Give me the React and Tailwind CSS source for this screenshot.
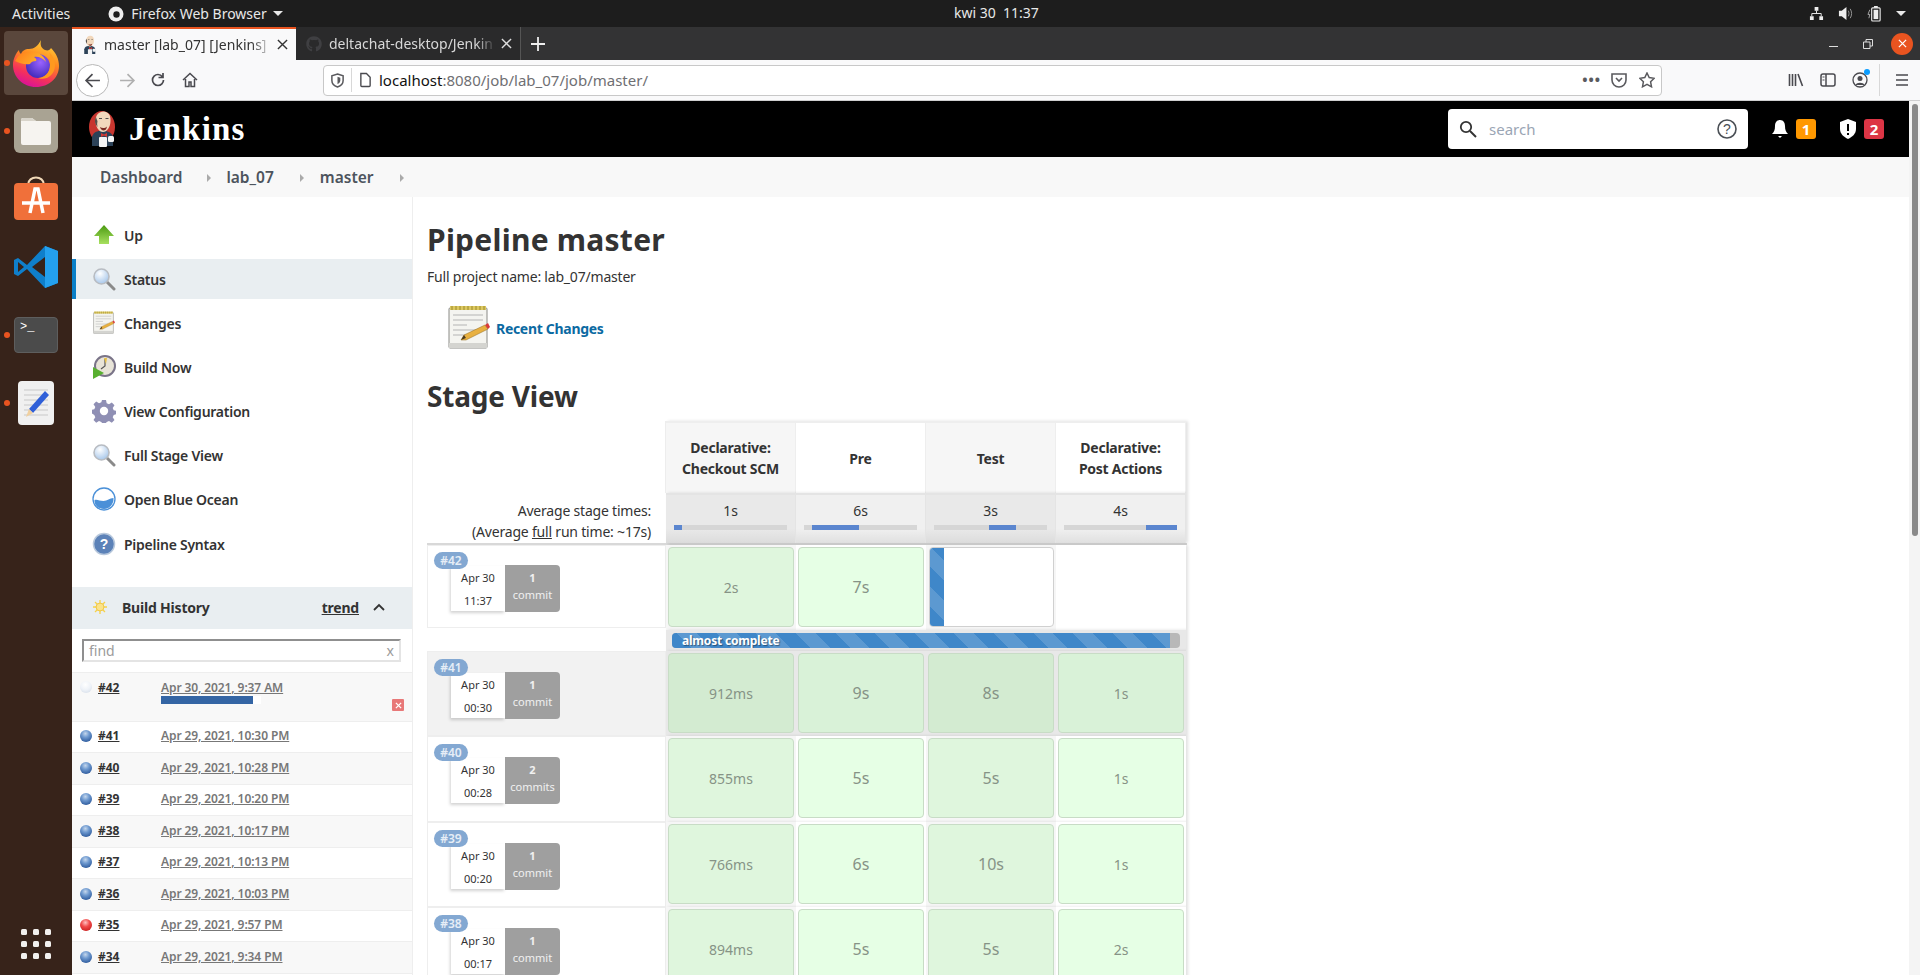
import React from "react";
import { FaGithub } from "react-icons/fa";

const sans = "font-['Noto_Sans',sans-serif]";
const stripes = "bg-[repeating-linear-gradient(45deg,#3f87c9_0,#3f87c9_14px,#5c99d1_14px,#5c99d1_28px)]";

function Jenkins({ className, plain }) {
  return (
    <svg viewBox="0 0 28 38" className={className}>
      {!plain && <ellipse cx="14" cy="17" rx="13" ry="16" fill="#c8362f" />}
      <path d="M4 36V27c1-4 4-6 8-6h6c4 1 7 3 7 7v8z" fill="#2c4258" />
      <path d="M7.500 11c0-6 3.500-9.500 8-9.500s7.500 3.500 7 9.500c0 6-3.500 11-7.500 11s-7.500-5-7.500-11z" fill="#f2d8bc" />
      <path d="M7.500 14c-1-3-.5-5 .5-7 .5 2 1 3 1.500 4-.5 2-.5 4 0 6z" fill="#55504c" />
      <path d="M12 17c2 1.500 5 1.500 7-.5-.5 3-2 4-3.500 4s-3-1.500-3.500-3.500z" fill="#7a2c24" />
      <path d="M11 8.500h3M17.500 8.500h3" stroke="#55504c" strokeWidth="1" />
      <path d="M13 23l3 1.500 3-1.500v4l-3-1.500-3 1.500z" fill="#d33833" />
      <rect x="11" y="27" width="8" height="10" rx="1" fill="#f4f4f4" />
      <rect x="20" y="26" width="6" height="6" rx="1.500" fill="#f4f4f4" />
    </svg>
  );
}

function Firefox() {
  return (
    <svg viewBox="0 0 48 48" className="w-[48px] h-[48px]">
      <defs>
        <linearGradient id="ff" x1="0.75" y1="0" x2="0.35" y2="1">
          <stop offset="0" stopColor="#ffd53a" />
          <stop offset="0.4" stopColor="#ff8a1f" />
          <stop offset="0.75" stopColor="#f5325a" />
          <stop offset="1" stopColor="#d9119a" />
        </linearGradient>
        <radialGradient id="ffp" cx="0.6" cy="0.35" r="0.7">
          <stop offset="0" stopColor="#9a63ff" />
          <stop offset="1" stopColor="#3f2ab8" />
        </radialGradient>
        <linearGradient id="ffh" x1="0" y1="0" x2="1" y2="0.4">
          <stop offset="0" stopColor="#ff7a1a" />
          <stop offset="1" stopColor="#ffb52a" />
        </linearGradient>
      </defs>
      <path d="M29 1c-1 5 0 8 4 10 3 1 5 0 6-2 5 5 8 11 8 18 0 12-10 21-23 21S1 38 1 26c0-6 3-12 6-15 0 2 1 3 2 4 1-3 4-5 8-5 5 0 9-3 12-9z" fill="url(#ff)" />
      <circle cx="26" cy="27" r="12" fill="url(#ffp)" />
      <path d="M3 22c3-6 8-9 14-9 8-1 15 3 17 10-3-4-8-6-12-5 2 1 3 3 2 4-3 0-5 1-6 3-5 1-11-1-15-3z" fill="url(#ffh)" />
      <path d="M38 26c0 8-6 13-12 13 7 3 17-2 17-13 0-6-3-10-6-13 2 4 1 8 1 13z" fill="#ff9a1f" />
    </svg>
  );
}

function Ball({ color = "blue" }) {
  const c = {
    blue: "bg-[radial-gradient(circle_at_45%_30%,#c5d7ec_0%,#6f9ad0_35%,#2f5c9e_80%)]",
    red: "bg-[radial-gradient(circle_at_45%_30%,#ffc0c0_0%,#f04848_40%,#c81e1e_85%)]",
    none: "bg-[radial-gradient(circle_at_45%_30%,#ffffff_0%,#eef2f8_50%,#d5dde8_90%)]",
  }[color];
  return <span className={`block w-[12px] h-[12px] rounded-full shrink-0 ${c}`} />;
}

function Magnifier() {
  return (
    <svg viewBox="0 0 24 24" className="w-[24px] h-[24px]">
      <defs>
        <radialGradient id="lens" cx="0.4" cy="0.3" r="0.8">
          <stop offset="0" stopColor="#ffffff" />
          <stop offset="1" stopColor="#9cc0e8" />
        </radialGradient>
      </defs>
      <line x1="14" y1="14" x2="22" y2="22" stroke="#8a8a8a" strokeWidth="3" strokeLinecap="round" />
      <circle cx="9.5" cy="9.5" r="7.5" fill="url(#lens)" stroke="#b8bcc2" strokeWidth="1.6" />
    </svg>
  );
}

function Notepad({ className }) {
  return (
    <svg viewBox="0 0 44 46" className={className}>
      <rect x="2" y="3" width="38" height="40" rx="1" fill="#f4f4f0" stroke="#8a8a86" />
      <rect x="2" y="38" width="38" height="5" fill="#d4d4d0" />
      <rect x="3" y="1" width="36" height="4" fill="#dcc860" />
      <path d="M5 1v4M9 1v4M13 1v4M17 1v4M21 1v4M25 1v4M29 1v4M33 1v4M37 1v4" stroke="#8a7a20" strokeWidth="0.8" />
      <path d="M6 10h30M6 15h30M6 20h14M6 25h24M6 30h14" stroke="#b4b4b4" strokeWidth="1" />
      <path d="M14 35l3-5 21-10 3 4-22 11z" fill="#e8b040" stroke="#90681c" strokeWidth="0.5" />
      <path d="M38 20l3 4 2-2-2-4z" fill="#d83a3a" />
      <path d="M14 35l3-5 2 3z" fill="#4a3a20" />
    </svg>
  );
}

function BuildNow() {
  return (
    <svg viewBox="0 0 24 24" className="w-[24px] h-[24px]">
      <circle cx="13" cy="11" r="10" fill="#e8e4d8" stroke="#7a7488" strokeWidth="2" />
      <path d="M13 4v7l-4 3" stroke="#555" strokeWidth="1.2" fill="none" />
      <path d="M12 3l3 0-1 6z" fill="#e8c040" />
      <path d="M1 12l11 6-11 6z" fill="#58b030" />
    </svg>
  );
}

function Gear() {
  return (
    <svg viewBox="0 0 24 24" className="w-[24px] h-[24px]">
      <path d="M10 1h4l.7 3.300 2.300 1 2.800-1.800 2.700 2.700-1.800 2.800 1 2.300 3.300.7v3l-3.300.9-1 2.300 1.800 2.800-2.700 2.700-2.800-1.800-2.300 1-.7 1.100h-4l-.7-1.100-2.300-1-2.800 1.800-2.700-2.700 1.800-2.800-1-2.300L-1 14v-3l3.300-.7 1-2.300-1.800-2.800 2.700-2.700L7 4.300l2.300-1z" fill="#8f8fb4" />
      <circle cx="12" cy="12" r="4.2" fill="#fff" />
    </svg>
  );
}

function Ocean() {
  return (
    <svg viewBox="0 0 24 24" className="w-[24px] h-[24px]">
      <circle cx="12" cy="12" r="11" fill="#fff" stroke="#4a90d8" strokeWidth="1.3" />
      <path d="M2.5 13c3-1 5 1 9 1s6-3 10-3c.5 6-4 11-9.500 11S2 18 2.500 13z" fill="#4a90d8" />
    </svg>
  );
}

function Help() {
  return (
    <svg viewBox="0 0 24 24" className="w-[24px] h-[24px]">
      <circle cx="12" cy="12" r="10.500" fill="#5c82b8" stroke="#b8c8dc" strokeWidth="1.500" />
      <text x="12" y="17" textAnchor="middle" fontSize="14" fontWeight="700" fill="#fff" fontFamily="Liberation Sans">?</text>
    </svg>
  );
}

function UpArrow() {
  return (
    <svg viewBox="0 0 24 24" className="w-[24px] h-[24px]">
      <defs>
        <linearGradient id="upg" x1="0" y1="0" x2="0" y2="1">
          <stop offset="0" stopColor="#4a9a10" />
          <stop offset="1" stopColor="#a8e060" />
        </linearGradient>
      </defs>
      <path d="M12 2l10 11h-5v8H7v-8H2z" fill="url(#upg)" />
    </svg>
  );
}

const navItems = [
  ["Up", <UpArrow />],
  ["Status", <Magnifier />],
  ["Changes", <Notepad className="w-[24px] h-[24px]" />],
  ["Build Now", <BuildNow />],
  ["View Configuration", <Gear />],
  ["Full Stage View", <Magnifier />],
  ["Open Blue Ocean", <Ocean />],
  ["Pipeline Syntax", <Help />],
];

const history = [
  ["#41", "Apr 29, 2021, 10:30 PM", "blue", "h-[31px]", "bg-white"],
  ["#40", "Apr 29, 2021, 10:28 PM", "blue", "h-[32px]", "bg-[#f8f8f8]"],
  ["#39", "Apr 29, 2021, 10:20 PM", "blue", "h-[31px]", "bg-white"],
  ["#38", "Apr 29, 2021, 10:17 PM", "blue", "h-[32px]", "bg-[#f8f8f8]"],
  ["#37", "Apr 29, 2021, 10:13 PM", "blue", "h-[31px]", "bg-white"],
  ["#36", "Apr 29, 2021, 10:03 PM", "blue", "h-[32px]", "bg-[#f8f8f8]"],
  ["#35", "Apr 29, 2021, 9:57 PM", "red", "h-[31px]", "bg-white"],
  ["#34", "Apr 29, 2021, 9:34 PM", "blue", "h-[32px]", "bg-[#f8f8f8]"],
];

const stages = [
  { title: ["Declarative:", "Checkout SCM"], avg: "1s", head: "bg-[#f6f6f6]", avgBg: "bg-[linear-gradient(#e9e9e9_70%,#dcdcdc)]", bar: "ml-0 w-[8px]" },
  { title: ["Pre"], avg: "6s", head: "bg-white", avgBg: "bg-[linear-gradient(#f0f0f0_70%,#e0e0e0)]", bar: "ml-[8px] w-[47px]" },
  { title: ["Test"], avg: "3s", head: "bg-[#f6f6f6]", avgBg: "bg-[linear-gradient(#e9e9e9_70%,#dcdcdc)]", bar: "ml-[55px] w-[27px]" },
  { title: ["Declarative:", "Post Actions"], avg: "4s", head: "bg-white", avgBg: "bg-[linear-gradient(#f0f0f0_70%,#e0e0e0)]", bar: "ml-[82px] w-[31px]" },
];

const runs = [
  { no: "#41", time: "00:30", n: "1", label: "commit", h: "h-[85px]", times: [["912ms", "text-[14px]"], ["9s", "text-[16px]"], ["8s", "text-[16px]"], ["1s", "text-[14px]"]], dark: true },
  { no: "#40", time: "00:28", n: "2", label: "commits", h: "h-[86px]", times: [["855ms", "text-[14px]"], ["5s", "text-[16px]"], ["5s", "text-[16px]"], ["1s", "text-[14px]"]] },
  { no: "#39", time: "00:20", n: "1", label: "commit", h: "h-[85px]", times: [["766ms", "text-[14px]"], ["6s", "text-[16px]"], ["10s", "text-[16px]"], ["1s", "text-[14px]"]] },
  { no: "#38", time: "00:17", n: "1", label: "commit", h: "h-[86px]", times: [["894ms", "text-[14px]"], ["5s", "text-[16px]"], ["5s", "text-[16px]"], ["2s", "text-[14px]"]] },
];

function RunInfo({ no, time, n, label }) {
  return (
    <div className="relative pl-[23px] pt-[13px]">
      <span className="absolute left-[6px] top-0 w-[34px] h-[17px] rounded-full bg-[#83a8d2] text-white/80 text-[12px] font-semibold leading-[17px] text-center">{no}</span>
      <div className="flex">
        <div className="w-[54px] h-[45px] mt-[1px] bg-white shadow-[-1px_2px_3px_rgba(0,0,0,0.18)] flex flex-col items-center justify-between py-[2.5px] text-[11px] leading-[17px] text-[#333]">
          <span>Apr 30</span>
          <span>{time}</span>
        </div>
        <div className="w-[55px] h-[47px] rounded-r-[4px] bg-[#9f9f9f] text-white/85 flex flex-col items-center pt-[5px] text-[11px] leading-[16px]">
          <span className="font-bold">{n}</span>
          <span className="mt-[1px]">{label}</span>
        </div>
      </div>
    </div>
  );
}

function StageCell({ text, size, color }) {
  return (
    <div className={`w-[126px] h-[80px] mx-[2px] rounded-[4px] border border-[#c8dcc6] flex items-center justify-center text-[#869386] ${size} ${color}`}>
      {text}
    </div>
  );
}

function StageView() {
  return (
    <div className="w-[760px] text-[#333]">
      {/* header */}
      <div className="flex">
        <div className="w-[239px]" />
        <div className="flex border-t-2 border-[#eeeeee] shadow-[2px_0_3px_rgba(0,0,0,0.12),-1px_0_0_#eeeeee]">
          {stages.map((s, i) => (
            <div key={i} className={`w-[130px] h-[70px] border-r border-[#eeeeee] flex flex-col items-center justify-center font-bold text-[14px] leading-[21px] tracking-[-0.25px] ${s.head}`}>
              {s.title.map((t) => <span key={t}>{t}</span>)}
            </div>
          ))}
        </div>
      </div>
      {/* averages */}
      <div className="flex border-b-2 border-[#d8d8d8]">
        <div className="w-[239px] h-[50px] flex flex-col items-end justify-center pt-[5px] pr-[15px] text-[14px] leading-[21px] tracking-[-0.2px]">
          <span>Average stage times:</span>
          <span>(Average <span className="underline">full</span> run time: ~17s)</span>
        </div>
        <div className="flex shadow-[2px_0_3px_rgba(0,0,0,0.12)]">
          {stages.map((s, i) => (
            <div key={i} className={`w-[130px] h-[50px] border-r border-t-2 border-[#e4e4e4] flex flex-col items-center pt-[6px] text-[14px] leading-[20px] ${s.avgBg}`}>
              <span>{s.avg}</span>
              <div className="w-[113px] h-[5px] mt-[4px] bg-[#d6d6d6] flex">
                <div className={`h-[5px] bg-[#5b86cf] ${s.bar}`} />
              </div>
            </div>
          ))}
        </div>
      </div>
      {/* running build */}
      <div className="flex h-[85px]">
        <div className="w-[239px] h-[83px] border border-[#eeeeee]">
          <div className="pt-[6px]">
            <RunInfo no="#42" time="11:37" n="1" label="commit" />
          </div>
        </div>
        <div className="flex h-[85px] shadow-[2px_0_3px_rgba(0,0,0,0.12)]">
          <div className="w-[130px] bg-[#f6f6f6] py-[2px]"><StageCell text="2s" size="text-[14px]" color="bg-[#dff6dd]" /></div>
          <div className="w-[130px] bg-white py-[2px]"><StageCell text="7s" size="text-[16px]" color="bg-[#e6ffe5]" /></div>
          <div className="w-[130px] bg-[#f6f6f6] py-[2px]">
            <div className="w-[125px] h-[80px] mx-[3px] rounded-[4px] border border-[#d0d0d0] bg-white overflow-hidden">
              <div className={`w-[14px] h-full ${stripes}`} />
            </div>
          </div>
          <div className="w-[130px] bg-white" />
        </div>
      </div>
      {/* progress */}
      <div className="flex h-[21px]">
        <div className="w-[239px]" />
        <div className="w-[520px] bg-[#e8e8e8] px-[6px] pt-[3px] shadow-[2px_0_3px_rgba(0,0,0,0.12)]">
          <div className="w-[508px] h-[15px] rounded-[4px] bg-[#b8b8b8] overflow-hidden">
            <div className={`w-[498px] h-[15px] ${stripes} pl-[10px] text-white text-[12px] font-bold leading-[15px] tracking-[-0.2px] [text-shadow:1px_1px_1px_rgba(0,0,0,0.4)]`}>
              almost complete
            </div>
          </div>
        </div>
      </div>
      {/* finished builds */}
      {runs.map((r) => (
        <div key={r.no} className={`flex ${r.h}`}>
          <div className={`w-[239px] border border-[#eeeeee] pt-[7px] ${r.dark ? "bg-[#f2f2f2]" : "bg-white"}`}>
            <RunInfo no={r.no} time={r.time} n={r.n} label={r.label} />
          </div>
          <div className="flex shadow-[2px_0_3px_rgba(0,0,0,0.12)]">
            {r.times.map(([t, size], i) => {
              const odd = i % 2 === 0;
              const bg = r.dark ? (odd ? "bg-[#d3ebd1]" : "bg-[#d9f2d8]") : odd ? "bg-[#dff6dd]" : "bg-[#e6ffe5]";
              return (
                <div key={i} className={`w-[130px] py-[2px] ${r.dark ? "bg-[#e8e8e8]" : odd ? "bg-[#f6f6f6]" : "bg-white"}`}>
                  <StageCell text={t} size={size} color={bg} />
                </div>
              );
            })}
          </div>
        </div>
      ))}
    </div>
  );
}

function Dock() {
  const slot = "relative h-[68px] flex items-center justify-center";
  const dot = <span className="absolute left-[4px] top-[31px] w-[6px] h-[6px] rounded-full bg-[#e95420]" />;
  return (
    <div className="w-[72px] shrink-0 bg-[#37231a] flex flex-col pt-[2px]">
      <div className={slot}>
        <div className="absolute left-[4px] top-[2px] w-[64px] h-[64px] rounded-[4px] bg-[#5a473c]" />
        <span className="relative"><Firefox /></span>
        {dot}
      </div>
      <div className={slot}>
        <div className="w-[44px] h-[44px] rounded-[6px] bg-[#a9a393] flex items-center justify-center">
          <svg viewBox="0 0 32 28" className="w-[32px] h-[28px]">
            <path d="M1 3a2 2 0 012-2h9l4 3h13a2 2 0 012 2v20a2 2 0 01-2 2H3a2 2 0 01-2-2z" fill="#f6f4f0" />
            <path d="M1 3a2 2 0 012-2h9l4 3H1z" fill="#d8d4ca" />
          </svg>
        </div>
        {dot}
      </div>
      <div className={slot}>
        <svg viewBox="0 0 44 46" className="w-[44px] h-[46px] -mt-[2px]">
          <path d="M14 10c0-10 16-10 16 0" stroke="#f2d9b8" strokeWidth="2" fill="none" />
          <rect x="0" y="8" width="44" height="37" rx="4" fill="#f0703a" />
          <path d="M16 38l5-24h3l5 24M8 28h28" stroke="#fff" strokeWidth="3.5" fill="none" />
        </svg>
      </div>
      <div className={slot}>
        <svg viewBox="0 0 44 44" className="w-[44px] h-[44px]">
          <path d="M31 1L13 20 4 13 0 15v14l4 2 9-7 18 19 13-5V6z" fill="#0f7fcb" />
          <path d="M31 1l13 5v32l-13 5z" fill="#24a0ee" />
          <path d="M31 12L18 22l13 10z" fill="#37231a" />
          <path d="M4 17l6 5-6 5z" fill="#37231a" />
        </svg>
      </div>
      <div className={slot}>
        <div className="w-[44px] h-[36px] rounded-[4px] bg-[#4b4b4b] border border-[#5e5e5e] text-white text-[12px] leading-[14px] pl-[5px] pt-[2px] font-['Liberation_Mono',monospace]">&gt;_</div>
        {dot}
      </div>
      <div className={slot}>
        <div className="w-[36px] h-[44px] rounded-[4px] bg-[#f0f0f0] flex items-center justify-center">
          <svg viewBox="0 0 30 38" className="w-[30px] h-[38px]">
            <path d="M3 6h24M3 11h24M3 16h24M3 21h24M3 26h24M3 31h24" stroke="#c8c8c8" strokeWidth="1" />
            <path d="M8 25L24 7l4 4-16 18z" fill="#2f5fd8" />
            <path d="M8 25l4 4-7 4z" fill="#f0d0a0" />
          </svg>
        </div>
        {dot}
      </div>
      <div className="mt-auto mb-[16px] mx-auto grid grid-cols-3 gap-[6px]">
        {Array.from({ length: 9 }).map((_, i) => (
          <span key={i} className="block w-[6px] h-[6px] rounded-[1.500px] bg-[#f2f0ee]" />
        ))}
      </div>
    </div>
  );
}

function BrowserChrome() {
  return (
    <>
      <div className="h-[33px] bg-[#333334] flex text-[15px]">
        <div className="w-[224px] border-t-2 border-[#e95420] bg-[#f9f9fa] flex items-center pl-[10px] pr-[8px] text-[#333]">
          <Jenkins plain className="w-[15px] h-[20px] shrink-0" />
          <span className="ml-[7px] flex-1 overflow-hidden whitespace-nowrap text-[14px] [mask-image:linear-gradient(90deg,#000_88%,transparent)]">master [lab_07] [Jenkins]</span>
          <svg viewBox="0 0 12 12" className="w-[11px] h-[11px] ml-[5px] shrink-0"><path d="M1 1l10 10M11 1L1 11" stroke="#333" strokeWidth="1.500" /></svg>
        </div>
        <div className="w-[225px] bg-[#2a2a2b] border-r border-[#555] flex items-center pl-[10px] pr-[8px] text-[#d8d8d8]">
          <FaGithub className="w-[16px] h-[16px] shrink-0 text-[#3f3f42]" />
          <span className="ml-[7px] flex-1 overflow-hidden whitespace-nowrap text-[14px] [mask-image:linear-gradient(90deg,#000_88%,transparent)]">deltachat-desktop/Jenkin</span>
          <svg viewBox="0 0 12 12" className="w-[11px] h-[11px] ml-[5px] shrink-0"><path d="M1 1l10 10M11 1L1 11" stroke="#ddd" strokeWidth="1.500" /></svg>
        </div>
        <div className="ml-[9px] w-[16px] flex items-center">
          <svg viewBox="0 0 16 16" className="w-[16px] h-[16px]"><path d="M8 1v14M1 8h14" stroke="#eee" strokeWidth="1.800" /></svg>
        </div>
        <div className="ml-auto flex items-center pr-[7px]">
          <span className="block w-[9px] h-[1.500px] bg-[#ddd] mt-[6px] mr-[25px]" />
          <svg viewBox="0 0 10 10" className="w-[10px] h-[10px] mr-[18px]"><path d="M.5 3h6.500v6.500H.5zM3 3V.5h6.500V7H7" stroke="#ddd" fill="none" /></svg>
          <span className="w-[22px] h-[22px] rounded-full bg-[#e95420] flex items-center justify-center">
            <svg viewBox="0 0 10 10" className="w-[9px] h-[9px]"><path d="M1 1l8 8M9 1L1 9" stroke="#fff" strokeWidth="1.400" /></svg>
          </span>
        </div>
      </div>
      <div className="h-[41px] bg-[#f9f9fa] border-b border-[#cfcfd0] flex items-center pl-[4px] text-[#4a4a4f]">
        <div className="w-[33px] h-[33px] rounded-full border border-[#b8b8b8] bg-white flex items-center justify-center">
          <svg viewBox="0 0 16 16" className="w-[17px] h-[17px]"><path d="M15 8H2M8 2L2 8l6 6" stroke="#4a4a4f" strokeWidth="1.600" fill="none" /></svg>
        </div>
        <svg viewBox="0 0 16 16" className="w-[17px] h-[17px] ml-[10px]"><path d="M1 8h13M8 2l6 6-6 6" stroke="#b0b0b0" strokeWidth="1.600" fill="none" /></svg>
        <svg viewBox="0 0 16 16" className="w-[16px] h-[16px] ml-[14px]"><path d="M13.500 8A5.500 5.500 0 118 2.500c2 0 3.500 1 4.500 2.500M13 1v4.500H8.500" stroke="#4a4a4f" strokeWidth="1.700" fill="none" /></svg>
        <svg viewBox="0 0 16 16" className="w-[16px] h-[16px] ml-[16px]"><path d="M1 8l7-6.500L15 8M3.500 7v7.500h3.500V10h2v4.500h3.500V7" stroke="#4a4a4f" strokeWidth="1.500" fill="none" /></svg>
        <div className="ml-[125px] w-[1339px] h-[31px] rounded-[4px] bg-white border border-[#c8c8c8] flex items-center">
          <svg viewBox="0 0 16 16" className="w-[15px] h-[15px] ml-[6px]"><path d="M8 1l6 2v5c0 4-3 6-6 7-3-1-6-3-6-7V3z" stroke="#5a5a5e" strokeWidth="1.600" fill="none" /><path d="M8 4l3 1v3c0 2-1.500 3-3 4z" fill="#5a5a5e" /></svg>
          <span className="w-px h-[24px] bg-[#d8d8d8] ml-[6px]" />
          <svg viewBox="0 0 14 16" className="w-[13px] h-[16px] ml-[7px]"><path d="M2 1h6l4 4v9a1 1 0 01-1 1H3a1 1 0 01-1-1z" stroke="#4a4a4f" strokeWidth="1.500" fill="none" /></svg>
          <span className="ml-[7px] text-[15px] text-[#111] whitespace-nowrap">localhost<span className="text-[#6f6f73]">:8080/job/lab_07/job/master/</span></span>
          <span className="ml-auto text-[#5a5a5e] text-[14px] font-bold tracking-[1px] leading-none">•••</span>
          <svg viewBox="0 0 16 16" className="w-[16px] h-[16px] ml-[10px]"><path d="M1 2h14v6a7 7 0 01-14 0z" stroke="#5a5a5e" strokeWidth="1.600" fill="none" /><path d="M5 6l3 3 3-3" stroke="#5a5a5e" strokeWidth="1.600" fill="none" /></svg>
          <svg viewBox="0 0 16 16" className="w-[16px] h-[16px] ml-[12px] mr-[6px]"><path d="M8 1l2.200 4.600 5 .7-3.600 3.500.9 5L8 12.400l-4.500 2.400.9-5L.8 6.300l5-.7z" stroke="#5a5a5e" strokeWidth="1.500" fill="none" /></svg>
        </div>
        <svg viewBox="0 0 16 16" className="w-[16px] h-[16px] ml-[126px]"><path d="M1.500 2v12M4.500 2v12M7.500 2v12M10 2l4.500 12" stroke="#4a4a4f" strokeWidth="1.600" fill="none" /></svg>
        <svg viewBox="0 0 16 16" className="w-[16px] h-[16px] ml-[16px]"><rect x="1" y="2" width="14" height="12" rx="2" stroke="#4a4a4f" strokeWidth="1.500" fill="none" /><path d="M6 2v12" stroke="#4a4a4f" strokeWidth="1.500" /><path d="M2.500 5h2M2.500 8h2" stroke="#4a4a4f" /></svg>
        <div className="relative ml-[16px] w-[16px] h-[16px]">
          <svg viewBox="0 0 16 16" className="w-[16px] h-[16px]"><circle cx="8" cy="8" r="7" stroke="#4a4a4f" strokeWidth="1.300" fill="none" /><circle cx="8" cy="6.500" r="2.500" fill="#4a4a4f" /><path d="M3.500 13c1-3 8-3 9 0z" fill="#4a4a4f" /></svg>
          <span className="absolute -right-[2px] -top-[3px] w-[6px] h-[6px] rounded-full bg-[#0a9dff]" />
        </div>
        <span className="w-px h-[32px] bg-[#d8d8d8] ml-[11px]" />
        <svg viewBox="0 0 14 14" className="w-[14px] h-[14px] ml-[15px]"><path d="M1 2h12M1 7h12M1 12h12" stroke="#4a4a4f" strokeWidth="1.700" /></svg>
      </div>
    </>
  );
}

function JenkinsHeader() {
  return (
    <div className="h-[56px] bg-black flex items-center text-white">
      <Jenkins className="w-[28px] h-[38px] ml-[16px]" />
      <span className="ml-[13px] text-[33px] font-bold font-['Liberation_Serif',serif] tracking-[1.2px] leading-none">Jenkins</span>
      <div className="ml-auto w-[300px] h-[40px] rounded-[4px] bg-white flex items-center px-[11px]">
        <svg viewBox="0 0 18 18" className="w-[18px] h-[18px]"><circle cx="7" cy="7" r="5.200" stroke="#333" strokeWidth="1.800" fill="none" /><path d="M11 11l6 6" stroke="#333" strokeWidth="2" /></svg>
        <span className="ml-[12px] text-[15px] text-[#9aa5b4]">search</span>
        <svg viewBox="0 0 20 20" className="ml-auto w-[20px] h-[20px]"><circle cx="10" cy="10" r="9" stroke="#4a4f55" strokeWidth="1.600" fill="none" /><text x="10" y="15" textAnchor="middle" fontSize="14" fill="#4a4f55" fontFamily="Liberation Sans">?</text></svg>
      </div>
      <svg viewBox="0 0 18 20" className="w-[18px] h-[20px] ml-[23px]"><path d="M9 1c3.500 0 5 3 5 6 0 4 1 6 3 8H1c2-2 3-4 3-8 0-3 1.500-6 5-6z" fill="#fff" /><path d="M7 17h4l-2 2z" fill="#fff" /></svg>
      <span className="ml-[7px] w-[20px] h-[20px] rounded-[3px] bg-[#ff9800] text-center text-[15px] leading-[20px] font-bold">1</span>
      <svg viewBox="0 0 18 22" className="w-[18px] h-[22px] ml-[23px]"><path d="M9 1l8 3v7c0 5-4 8-8 10-4-2-8-5-8-10V4z" fill="#fff" /><path d="M9 6v7M9 15v2" stroke="#000" strokeWidth="2" /></svg>
      <span className="ml-[7px] w-[20px] h-[20px] rounded-[3px] bg-[#dc3545] text-center text-[15px] leading-[20px] font-bold mr-[25px]">2</span>
    </div>
  );
}

function Caret({ className }) {
  return <span className={`block w-0 h-0 border-y-[4px] border-y-transparent border-l-[4px] border-l-[#aaaaaa] ${className}`} />;
}

function Breadcrumb() {
  return (
    <div className="h-[40px] bg-[#f8f8f8] flex items-center pl-[28px] pt-[1px] text-[15.5px] font-semibold text-[#4d545d]">
      <span>Dashboard</span>
      <Caret className="ml-[25px]" />
      <span className="ml-[15px]">lab_07</span>
      <Caret className="ml-[26px]" />
      <span className="ml-[16px]">master</span>
      <Caret className="ml-[26px]" />
    </div>
  );
}

function SidePanel() {
  return (
    <div className="w-[341px] shrink-0 border-r border-[#eeeeee] pt-[18px]">
      <div className="flex flex-col gap-[4px]">
        {navItems.map(([label, icon]) => (
          <div key={label} className={`h-[40px] flex items-center pl-[20px] text-[14px] font-semibold tracking-[-0.25px] text-[#333] ${label === "Status" ? "bg-[#e9eef1] border-l-4 border-[#0b7fc7] !pl-[16px]" : ""} ${label === "Pipeline Syntax" ? "mt-[1px]" : ""}`}>
            <span className="w-[24px] h-[24px] flex items-center justify-center">{icon}</span>
            <span className="ml-[8px]">{label}</span>
          </div>
        ))}
      </div>
      <div className="mt-[23px] h-[42px] bg-[#e9eef1] flex items-center pl-[21px] pb-[2px] text-[14px] font-bold tracking-[-0.2px] text-[#333]">
        <svg viewBox="0 0 16 16" className="w-[14px] h-[14px]">
          <path d="M8 0v16M0 8h16M2.300 2.300l11.400 11.400M13.700 2.300L2.300 13.700" stroke="#f6d24a" strokeWidth="1.500" />
          <circle cx="8" cy="8" r="4.500" fill="#fbe38a" stroke="#eec23a" />
        </svg>
        <span className="ml-[15px]">Build History</span>
        <span className="ml-auto underline">trend</span>
        <svg viewBox="0 0 12 8" className="w-[12px] h-[8px] ml-[14px] mr-[27px]"><path d="M1 7l5-5 5 5" stroke="#333" strokeWidth="1.800" fill="none" /></svg>
      </div>
      <div className="h-[43px] pt-[10px] px-[10px]">
        <div className="w-[319px] h-[23px] border-2 border-[#e4e4e4] border-t-[#8f8f8f] border-l-[#8f8f8f] flex items-center justify-between px-[5px] text-[14px] text-[#9b9b9b]">
          <span>find</span>
          <span>x</span>
        </div>
      </div>
      <div className="h-[50px] border-y border-[#eeeeee] bg-[#f8f8f8] relative flex pl-[8px] pt-[6px]">
        <span className="mt-[2px]"><Ball color="none" /></span>
        <span className="ml-[6px] w-[63px] text-[12px] font-bold underline leading-[17px] text-[#333]">#42</span>
        <div>
          <div className="text-[12px] font-semibold underline leading-[17px] tracking-[-0.1px] text-[#777]">Apr 30, 2021, 9:37 AM</div>
          <div className="w-[100px] h-[8px] bg-white"><div className="w-[92px] h-[8px] bg-[#3465a4]" /></div>
        </div>
        <span className="absolute right-[8px] top-[26px] w-[12px] h-[12px] rounded-[1px] bg-[#e87878] flex items-center justify-center">
          <svg viewBox="0 0 8 8" className="w-[7px] h-[7px]"><path d="M1 1l6 6M7 1L1 7" stroke="#fff" strokeWidth="1.500" /></svg>
        </span>
      </div>
      {history.map(([no, date, color, h, bg]) => (
        <div key={no} className={`${h} ${bg} border-b border-[#eeeeee] flex items-center pl-[8px] pb-[2px]`}>
          <Ball color={color} />
          <span className="ml-[6px] w-[63px] text-[12px] font-bold underline text-[#333]">{no}</span>
          <span className="text-[12px] font-semibold underline tracking-[-0.1px] text-[#777]">{date}</span>
        </div>
      ))}
    </div>
  );
}

export default function App() {
  return (
    <div className={`w-[1920px] h-[975px] overflow-hidden flex flex-col bg-white ${sans}`}>
      {/* ubuntu top bar */}
      <div className="h-[27px] shrink-0 bg-[#1d1d1d] text-[#e8e8e8] text-[14px] flex items-center relative">
        <span className="ml-[12px]">Activities</span>
        <svg viewBox="0 0 16 16" className="w-[16px] h-[16px] ml-[38px]"><circle cx="8" cy="8" r="7.500" fill="#eee" /><circle cx="8.500" cy="8.500" r="3.200" fill="#1d1d1d" /></svg>
        <span className="ml-[7px]">Firefox Web Browser</span>
        <span className="ml-[6px] w-0 h-0 border-x-[5px] border-x-transparent border-t-[5px] border-t-[#e8e8e8]" />
        <span className="absolute left-[954px] top-[3px] leading-[20px]">kwi 30&nbsp;&nbsp;11:37</span>
        <div className="ml-auto flex items-center pr-[14px]">
          <svg viewBox="0 0 16 16" className="w-[15px] h-[15px]"><path d="M6 1h4v4H6zM1 11h4v4H1zM11 11h4v4h-4z" fill="#eee" /><path d="M8 5v3M3 11V8h10v3" stroke="#eee" fill="none" /></svg>
          <svg viewBox="0 0 16 16" className="w-[15px] h-[15px] ml-[14px]"><path d="M1 5h3l5-4v14l-5-4H1z" fill="#eee" /><path d="M11 5c1 2 1 4 0 6M13 3c2 3 2 7 0 10" stroke="#999" fill="none" /></svg>
          <svg viewBox="0 0 16 18" className="w-[15px] h-[17px] ml-[14px]"><rect x="5" y="3" width="9" height="14" rx="1" stroke="#eee" strokeWidth="1.200" fill="none" /><rect x="7" y="5" width="5" height="10" fill="#eee" /><path d="M7.500 1h4v2h-4z" fill="#eee" /><path d="M3 5L1 10h2l-1 4" stroke="#aaa" fill="none" /></svg>
          <span className="ml-[14px] w-0 h-0 border-x-[5px] border-x-transparent border-t-[5px] border-t-[#e8e8e8]" />
        </div>
      </div>
      <div className="flex-1 flex min-h-0">
        <Dock />
        <div className="flex-1 flex flex-col min-w-0">
          <BrowserChrome />
          <div className="flex-1 flex min-h-0">
            <div className="flex-1 flex flex-col min-w-0">
              <JenkinsHeader />
              <Breadcrumb />
              <div className="flex-1 flex min-h-0">
                <SidePanel />
                <div className="flex-1 pl-[14px] pt-[23px] min-w-0">
                  <h1 className="h-[40px] text-[30px] font-bold leading-[40px] tracking-[0.25px] text-[#333]">Pipeline master</h1>
                  <p className="mt-[5px] h-[24px] text-[14px] leading-[24px] tracking-[-0.2px] text-[#333]">Full project name: lab_07/master</p>
                  <div className="mt-[16px] h-[46px] pl-[20px] flex items-center">
                    <Notepad className="w-[44px] h-[46px]" />
                    <span className="ml-[5px] text-[14px] font-bold tracking-[-0.3px] text-[#0b6aa2]">Recent Changes</span>
                  </div>
                  <h2 className="mt-[25px] h-[40px] text-[28px] font-bold leading-[40px] tracking-[-0.2px] text-[#333]">Stage View</h2>
                  <div className="mt-[5px]"><StageView /></div>
                </div>
              </div>
            </div>
            <div className="w-[11px] shrink-0 bg-[#f4f4f4] pt-[3px] flex justify-center">
              <div className="w-[6px] h-[432px] rounded-full bg-[#8a8a8a]" />
            </div>
          </div>
        </div>
      </div>
    </div>
  );
}
